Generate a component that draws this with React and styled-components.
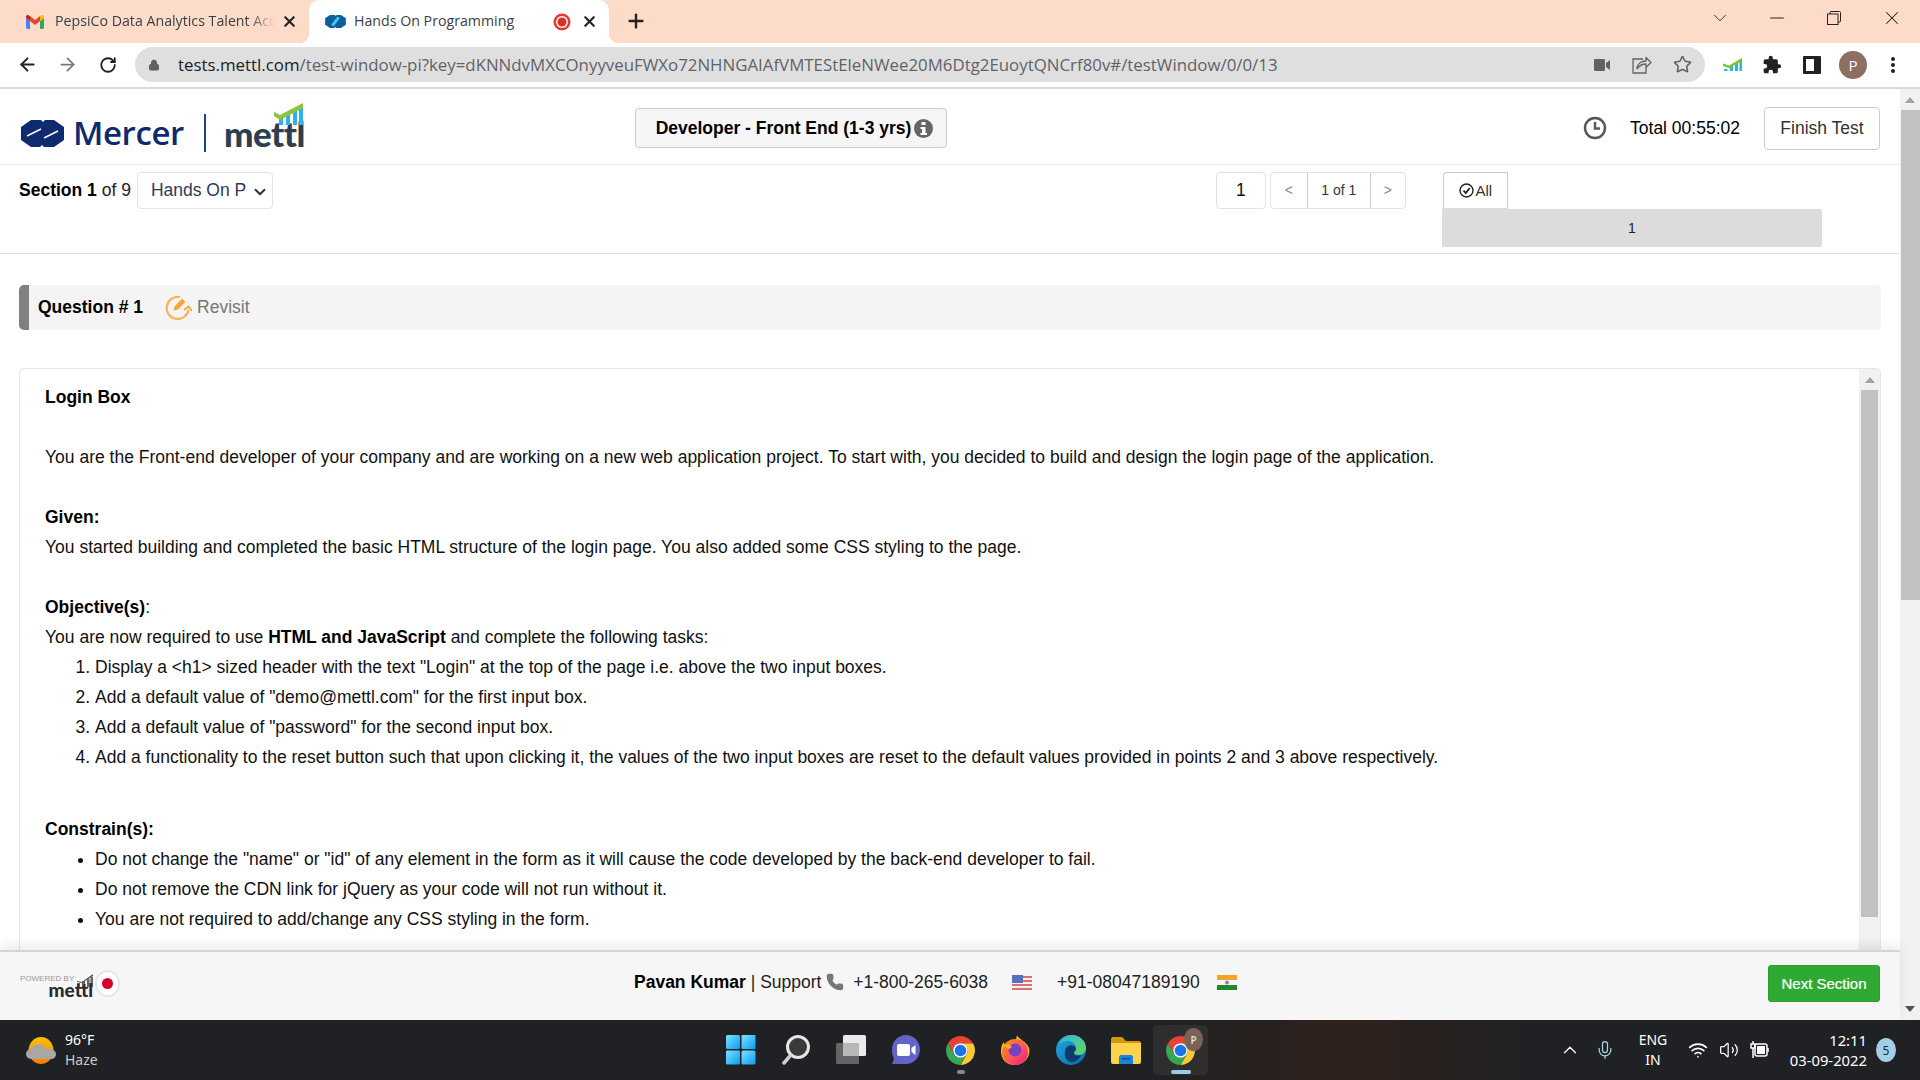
import React from 'react';
import styled, { createGlobalStyle } from 'styled-components';
import { ArrowLeft, ArrowRight, RotateCw, Lock, Star, X, Plus, ChevronDown, Minus, ChevronUp, Mic, Wifi, Volume2, Phone } from 'lucide-react';

const Global = createGlobalStyle`
  html, body { margin: 0; padding: 0; height: 100%; overflow: hidden; background: #fff; }
  * { box-sizing: border-box; }
  body { font-family: "Liberation Sans", Arial, sans-serif; color: #212529; }
`;
const Shell = styled.div`display:flex;flex-direction:column;width:1920px;height:1080px;overflow:hidden;`;

/* browser chrome */
const TabStrip = styled.div`display:flex;align-items:stretch;height:43px;flex:none;background:#fcdcc9;font-family:"Open Sans","Noto Sans",sans-serif;font-size:14.200px;color:#3c4043;`;
const Tab = styled.div`
  position:relative;display:flex;align-items:center;height:43px;flex:none;
  width:${p=>p.$w}px;padding-left:${p=>p.$pad}px;
  background:${p=>p.$active?'#fff':'transparent'};
  border-radius:${p=>p.$active?'10px 10px 0 0':'0'};
  ${p=>p.$active?`
    &::before,&::after{content:"";position:absolute;bottom:0;width:10px;height:10px;}
    &::before{left:-10px;background:radial-gradient(circle at 0 0,transparent 10px,#fff 10.5px);}
    &::after{right:-10px;background:radial-gradient(circle at 100% 0,transparent 10px,#fff 10.5px);}
  `:''}
`;
const TabTitle = styled.span`
  margin-left:${p=>p.$ml}px;width:${p=>p.$w}px;white-space:nowrap;overflow:hidden;flex:none;padding-bottom:2px;
  ${p=>p.$fade?'mask-image:linear-gradient(90deg,#000 88%,transparent);':''}
`;
const TabGap = styled.span`flex:none;width:${p=>p.$w}px;`;
const CloseGlyph = styled(X)`flex:none;width:17px;height:17px;stroke-width:3;color:#222;`;
const NewTab = styled(Plus)`flex:none;width:22px;height:22px;stroke-width:2.6;color:#222;margin:10px 0 0 16px;`;
const WinControls = styled.div`margin-left:auto;display:flex;align-items:center;height:36px;color:#222;`;
const WinCell = styled.span`display:flex;justify-content:center;align-items:center;width:${p=>p.$w}px;`;

const ToolBar = styled.div`display:flex;align-items:center;height:46px;flex:none;background:#fff;border-bottom:2px solid #d8d8d8;padding-bottom:1px;`;
const NavCell = styled.span`flex:none;width:${p=>p.$w}px;margin-left:${p=>p.$ml||0}px;display:flex;justify-content:center;align-items:center;color:${p=>p.$c||'#222'};`;
const Omnibox = styled.div`flex:none;display:flex;align-items:center;width:1570px;height:35px;background:#dfdfdf;border-radius:18px;padding-left:13px;`;
const Url = styled.div`font-family:"Open Sans","Noto Sans",sans-serif;font-size:16.850px;color:#5f6368;margin-left:18px;white-space:nowrap;flex:1;overflow:hidden;`;
const UrlHost = styled.span`color:#202124;`;
const OmniIcon = styled.span`flex:none;display:flex;justify-content:center;width:${p=>p.$w}px;color:#5f6368;`;
const Avatar = styled.span`display:flex;justify-content:center;align-items:center;width:28px;height:28px;border-radius:50%;background:#8d6e63;color:#fff;font-family:"Open Sans",sans-serif;font-size:15px;`;

/* page */
const PageArea = styled.div`flex:1;min-height:0;display:flex;`;
const Main = styled.div`flex:none;width:1900px;display:flex;flex-direction:column;min-height:0;`;
const Header = styled.header`flex:none;height:76px;display:flex;align-items:center;border-bottom:1px solid #eee;padding:3px 20px 0 19px;`;
const LogoBlock = styled.div`flex:0 0 616px;display:flex;align-items:center;height:40px;margin-top:10px;padding-left:2px;color:#0d2b6e;`;
const MercerWord = styled.span`font-family:"Open Sans",sans-serif;font-weight:600;font-size:33px;letter-spacing:-.4px;margin-left:9px;line-height:40px;`;
const LogoRule = styled.span`width:2px;height:38px;background:#1e4488;margin-left:20px;flex:none;`;
const MettlMark = styled.span`position:relative;display:inline-block;margin-left:18px;`;
const MettlWord = styled.span`font-family:Lato,"Open Sans",sans-serif;font-weight:900;font-size:35px;letter-spacing:-.5px;line-height:40px;color:#2f3e4e;display:block;`;
const MettlBars = styled.svg`position:absolute;left:50px;top:-10px;`;
const TestTitle = styled.div`flex:none;display:flex;align-items:center;justify-content:center;gap:3px;width:312px;height:40px;padding-left:7px;background:#f6f6f6;border:1px solid #ccc;border-radius:4px;font-weight:700;font-size:17.500px;color:#000;`;
const HeadRight = styled.div`margin-left:auto;display:flex;align-items:center;`;
const Total = styled.span`font-size:17.500px;color:#000;margin:0 24px 0 23px;`;
const FinishBtn = styled.button`width:116px;height:43px;font:17.500px "Liberation Sans",sans-serif;color:#333;background:#fff;border:1px solid #ccc;border-radius:4px;padding:0;`;

const SectionRow = styled.div`flex:none;height:89px;display:flex;align-items:flex-start;border-bottom:1px solid #e3e3e3;padding:7px 0 0 19px;`;
const SectionLabel = styled.span`font-size:17.500px;line-height:37px;color:#222;margin-right:6px;`;
const Strong = styled.strong`color:#000;font-weight:700;`;
const SelectBox = styled.div`display:flex;align-items:center;width:136px;height:37px;border:1px solid #e2e4ea;border-radius:4px;padding-left:13px;font-size:17.500px;color:#2f3a57;background:#fff;position:relative;`;
const SelectChevron = styled(ChevronDown)`position:absolute;right:3px;top:10px;width:18px;height:18px;stroke-width:2.6;color:#2b3240;`;
const CountBox = styled.div`margin-left:943px;flex:none;display:flex;justify-content:center;align-items:center;width:50px;height:37px;border:1px solid #e2e2e2;border-radius:4px;font-size:17.500px;color:#111;`;
const PageGroup = styled.div`flex:none;display:flex;margin-left:4px;height:37px;border:1px solid #e2e2e2;border-radius:4px;`;
const PageCell = styled.div`display:flex;justify-content:center;align-items:center;width:${p=>p.$w}px;font-size:14px;padding-bottom:1px;color:${p=>p.$dim?'#888':'#333'};${p=>p.$mid?'border-left:1px solid #ccc;border-right:1px solid #ccc;':''}`;
const FilterCol = styled.div`flex:none;margin-left:36px;width:380px;display:flex;flex-direction:column;`;
const AllBtn = styled.div`display:flex;align-items:center;justify-content:center;gap:2px;width:65px;height:37px;margin-left:1px;border:1px solid #ccc;border-bottom-color:#ddd;border-radius:4px 0 0 0;font-size:15px;color:#333;`;
const QuestionCell = styled.div`display:flex;justify-content:center;align-items:center;height:38px;background:#dcdcdc;border-radius:0 3px 3px 0;font-size:14px;color:#222;`;

const QuestionBar = styled.div`flex:none;display:flex;align-items:center;height:45px;margin:31px 19px 0 19px;background:#f4f4f4;border-left:10px solid #808080;border-radius:5px;padding-left:9px;`;
const QTitle = styled.span`font-weight:700;font-size:17.500px;color:#000;margin-right:22px;`;
const RevisitLabel = styled.span`font-size:17.500px;color:#777;margin-left:5px;`;

const Panel = styled.section`flex:1;min-height:0;display:flex;margin:38px 19px 0 19px;border:1px solid #e6e6e6;border-bottom:0;border-radius:5px 5px 0 0;overflow:hidden;`;
const Article = styled.div`flex:1;padding:13px 0 0 25px;font-size:17.500px;line-height:30px;color:#111;`;
const Para = styled.div`margin-top:${p=>p.$mt||0}px;margin-bottom:${p=>p.$mb||0}px;`;
const Heading = styled.strong`font-weight:700;color:#000;`;
const Ol = styled.ol`margin:0;padding-left:50px;`;
const Ul = styled.ul`margin:0;padding-left:50px;`;
const InnerTrack = styled.div`flex:none;width:21px;background:#f1f1f1;display:flex;flex-direction:column;align-items:center;padding-top:8px;`;
const ArrowUp = styled.span`width:0;height:0;border-left:5px solid transparent;border-right:5px solid transparent;border-bottom:6px solid #a3a3a3;`;
const ArrowDown = styled.span`width:0;height:0;border-left:5px solid transparent;border-right:5px solid transparent;border-top:6px solid #505050;`;
const InnerThumb = styled.div`width:17px;height:527px;background:#c1c1c1;margin-top:7px;`;

const Footer = styled.footer`flex:none;position:relative;height:70px;display:flex;align-items:center;background:#f6f6f6;border-top:2px solid #d4d4d4;box-shadow:0 -6px 10px rgba(0,0,0,.07);padding:0 20px 6px 20px;`;
const Powered = styled.div`flex:0 0 614px;display:flex;align-items:center;`;
const PoweredText = styled.div`position:relative;width:73px;height:30px;`;
const PoweredBy = styled.span`position:absolute;left:0;top:6px;font-size:8px;line-height:9px;color:#999;white-space:nowrap;`;
const PoweredWord = styled.span`position:absolute;right:0;top:15px;font-family:Lato,sans-serif;font-weight:900;font-size:19px;line-height:14px;color:#2b2b2b;`;
const PoweredBars = styled.svg`position:absolute;right:0;top:6px;`;
const RedDot = styled.span`display:flex;justify-content:center;align-items:center;width:25px;height:27px;margin-left:2px;border-radius:50%;background:#fff;border:2px solid #e6e6e6;&::after{content:"";width:11px;height:11px;border-radius:50%;background:#d8002a;}`;
const Support = styled.div`display:flex;align-items:center;font-size:17.500px;color:#222;white-space:pre;margin-bottom:2px;`;
const PhoneNum = styled.span`margin:0 ${p=>p.$mr}px 0 ${p=>p.$ml}px;`;
const Flag = styled.svg`flex:none;`;
const NextBtn = styled.button`margin-left:auto;width:112px;height:37px;background:#2eaa33;border:1px solid #28a02d;border-radius:3px;color:#fff;font:400 15px "Liberation Sans",sans-serif;-webkit-text-stroke:.2px #fff;padding:0;`;
const PageScroll = styled.div`flex:1;background:#f1f1f1;display:flex;flex-direction:column;align-items:flex-end;padding-top:8px;min-height:0;`;
const PageArrowWrap = styled.span`align-self:center;display:flex;`;
const PageThumb = styled.div`width:19px;height:490px;background:#c1c1c1;margin-top:7px;`;
const PageArrowDown = styled.span`align-self:center;margin-top:auto;margin-bottom:8px;display:flex;`;

/* taskbar */
const Taskbar = styled.div`flex:none;position:relative;display:flex;align-items:center;height:60px;background:linear-gradient(90deg,#202124 0%,#202124 60%,#2f211b 70%,#202124 80%);color:#fff;font-family:"Noto Sans","Open Sans",sans-serif;`;
const Weather = styled.div`flex:0 0 713px;display:flex;align-items:center;padding-left:26px;`;
const WeatherText = styled.div`margin-left:9px;font-size:14px;line-height:20px;`;
const WeatherSub = styled.div`color:#ccc;`;
const Dock = styled.div`display:flex;align-items:center;`;
const DockCell = styled.div`position:relative;flex:none;display:flex;justify-content:center;align-items:center;width:55px;height:50px;${p=>p.$active?'background:rgba(255,255,255,.06);border-radius:5px;':''}`;
const DockPip = styled.span`position:absolute;bottom:1px;left:50%;transform:translateX(-50%);height:4px;border-radius:2px;width:${p=>p.$active?20:8}px;background:${p=>p.$active?'#9ccbe3':'#888'};`;
const PBadge = styled.span`position:absolute;top:3px;right:5px;width:19px;height:23px;border-radius:50%;background:#7b6156;color:#ddd;font-size:10px;font-weight:600;display:flex;justify-content:center;align-items:center;`;
const Tray = styled.div`margin-left:auto;display:flex;align-items:center;padding-right:53px;`;
const TrayCell = styled.span`flex:none;display:flex;justify-content:center;align-items:center;width:${p=>p.$w}px;margin-left:${p=>p.$ml||0}px;`;
const Lang = styled.div`flex:none;width:40px;margin-left:16px;text-align:center;font-size:14px;line-height:20px;`;
const Clock2 = styled.div`flex:none;margin-left:18px;text-align:right;font-size:14.800px;line-height:20px;width:78px;white-space:nowrap;`;
const Notif = styled.span`position:absolute;right:24px;top:18px;width:20px;height:24px;border-radius:50%;background:#a3cfe6;color:#1c2b33;font-size:12px;display:flex;justify-content:center;align-items:center;`;

const Gmail = () => (
  <svg width="18" height="14" viewBox="0 0 18 14">
    <path d="M0 3v9.6c0 .8.6 1.4 1.3 1.4H4V6z" fill="#4285f4"/>
    <path d="M14 6v8h2.7c.7 0 1.3-.6 1.3-1.4V3z" fill="#34a853"/>
    <path d="M14 1v5l4-3V1.700C18 .3 16.300-.5 15.200.4z" fill="#fbbc04"/>
    <path d="M4 6V1l5 4 5-4v5L9 10z" fill="#ea4335"/>
    <path d="M0 1.700V3l4 3V1L2.800.4C1.700-.5 0 .3 0 1.700z" fill="#c5221f"/>
  </svg>
);
const MercerFav = () => (
  <svg width="21" height="13" viewBox="0 0 43 27">
    <path d="M10 0H20L22 2 24 0H33L43 7V20L33 27H23L21 25 19 27H10L0 20V7Z" fill="#0c5f9e"/>
    <path d="M15 22L28 5" stroke="#4dc3e8" strokeWidth="6"/>
  </svg>
);
const RecDot = () => (
  <svg width="18" height="18" viewBox="0 0 18 18"><circle cx="9" cy="9" r="8.500" fill="#e53935"/><circle cx="9" cy="9" r="6" fill="#fff"/><circle cx="9" cy="9" r="4.500" fill="#d93025"/></svg>
);
const VideoCam = () => (
  <svg width="16" height="12" viewBox="0 0 16 12"><path d="M0 1.200C0 .5.500 0 1.200 0h8.600c.7 0 1.200.5 1.200 1.200v9.600c0 .7-.5 1.200-1.200 1.200H1.200C.5 12 0 11.500 0 10.800z M12 4l4-3v10l-4-3z" fill="#5f6368"/></svg>
);
const ShareIcon = () => (
  <svg width="20" height="18" viewBox="0 0 20 18" fill="none" stroke="#5f6368" strokeWidth="1.300">
    <path d="M11 3H1v14h13v-5"/>
    <path d="M5 13c0-5 4-8 9-8V1.500l5 5-5 5V8c-4 0-7 2-9 5z" strokeLinejoin="round"/>
  </svg>
);
const TinyMettl = () => (
  <svg width="20" height="20" viewBox="0 0 20 20">
    <path d="M1 16v-2h3.500v2zM7 16v-5h3v5zM12 16V8h3v8zM16.500 16V6H19v10z" fill="#29b6d8"/>
    <path d="M0 8.500l6 2L19 3v3L6 13l-6-2z" fill="#7cc423"/>
  </svg>
);
const PuzzleIcon = () => (
  <svg width="20" height="20" viewBox="0 0 24 24"><path fill="#222" d="M20.500 11H19V7a2 2 0 0 0-2-2h-4V3.500a2.500 2.500 0 0 0-5 0V5H4a2 2 0 0 0-2 2v3.800h1.500a2.700 2.700 0 0 1 0 5.400H2V20a2 2 0 0 0 2 2h3.800v-1.500a2.700 2.700 0 0 1 5.400 0V22H17a2 2 0 0 0 2-2v-4h1.500a2.500 2.500 0 0 0 0-5z"/></svg>
);
const SidePanel = () => (
  <svg width="18" height="18" viewBox="0 0 18 18"><rect width="18" height="18" rx="1" fill="#202124"/><rect x="3" y="3" width="8" height="12" fill="#fff"/></svg>
);
const Dots = () => (
  <svg width="6" height="18" viewBox="0 0 6 18"><circle cx="3" cy="3" r="2" fill="#222"/><circle cx="3" cy="9" r="2" fill="#222"/><circle cx="3" cy="15" r="2" fill="#222"/></svg>
);
const RestoreIcon = () => (
  <svg width="14" height="14" viewBox="0 0 14 14" fill="none" stroke="#222" strokeWidth="1"><rect x=".5" y="3" width="10.500" height="10.500"/><path d="M3 3V1.500c0-.6.4-1 1-1h8.500c.6 0 1 .4 1 1V10c0 .6-.4 1-1 1H11"/></svg>
);
const MercerMark = () => (
  <svg width="43" height="27" viewBox="0 0 43 27">
    <path d="M10 0H20L22 2 24 0H33L43 7V20L33 27H23L21 25 19 27H10L0 20V7Z" fill="#0d2b6e"/>
    <path d="M6 16L20 9" stroke="#fff" strokeWidth="1.500"/>
    <path d="M23 18L37 11" stroke="#fff" strokeWidth="1.500"/>
  </svg>
);
const InfoBadge = () => (
  <svg width="19" height="19" viewBox="0 0 19 19"><circle cx="9.500" cy="9.500" r="9.500" fill="#666"/><rect x="7.500" y="3" width="4" height="3" fill="#fff"/><path d="M6.500 8h5v6h1.500v2H6.500v-2H8v-4H6.500z" fill="#fff"/></svg>
);
const ClockIcon = () => (
  <svg width="24" height="24" viewBox="0 0 24 24" fill="none" stroke="#555" strokeWidth="2.400"><circle cx="12" cy="12" r="10"/><path d="M12 6v6.500h5"/></svg>
);
const RevisitIcon = () => (
  <svg width="27" height="25" viewBox="0 0 27 25" fill="none">
    <path d="M15 2.200A11 11 0 1 0 23.500 15" stroke="#f6b55a" strokeWidth="2.200"/>
    <path d="M8.500 15.500l1-4L17 3.500l3.500 3.500L13 14.500z" fill="#f6a63c"/>
    <path d="M19 15l4.500-3.500 3.500 4.500" stroke="#f6a63c" strokeWidth="1.800"/>
  </svg>
);
const AllCheck = () => (
  <svg width="15" height="15" viewBox="0 0 15 15" fill="none" stroke="#222"><circle cx="7.500" cy="7.500" r="6.500" strokeWidth="1.400"/><path d="M4.500 7.500l2.200 2.500 4-5" strokeWidth="1.800"/></svg>
);
const UsFlag = () => (
  <Flag width="20" height="15" viewBox="0 0 20 15">
    <rect width="20" height="15" fill="#f2f2f2"/>
    <path d="M0 1h20v2H0zM0 5h20v2H0zM0 9h20v2H0zM0 13h20v2H0z" fill="#d9706c"/>
    <rect width="11" height="8" fill="#5a6fc0"/>
  </Flag>
);
const InFlag = () => (
  <Flag width="20" height="15" viewBox="0 0 20 15">
    <rect width="20" height="5" fill="#f0a42c"/><rect y="5" width="20" height="5" fill="#f5f5f5"/><rect y="10" width="20" height="5" fill="#1f8a2c"/>
    <circle cx="10" cy="7.500" r="2" fill="#7f88b8"/>
  </Flag>
);
const SunCloud = () => (
  <svg width="30" height="27" viewBox="0 0 30 27">
    <defs><linearGradient id="sun" x1="0" y1="0" x2="0" y2="1"><stop offset="0" stopColor="#ffc107"/><stop offset="1" stopColor="#f57c00"/></linearGradient></defs>
    <ellipse cx="15" cy="13.500" rx="12.500" ry="13.500" fill="url(#sun)"/>
    <path d="M5 22a5 5 0 0 1 0-10 7 7 0 0 1 4-4c3-2 8-1 9 2 1 1 2 1 3 2 5-1 9 2 9 5s-2 5-5 5z" fill="#a9a7a3"/>
  </svg>
);
const WinLogo = () => (
  <svg width="30" height="30" viewBox="0 0 30 30">
    <defs><linearGradient id="w" x1="0" y1="0" x2="1" y2="1"><stop offset="0" stopColor="#7be3ff"/><stop offset="1" stopColor="#0a9bf5"/></linearGradient></defs>
    <rect width="14" height="14" rx="1.500" fill="url(#w)"/><rect x="15.500" width="14" height="14" rx="1" fill="url(#w)"/>
    <rect y="15.500" width="14" height="14" rx="1" fill="url(#w)"/><rect x="15.500" y="15.500" width="14" height="14" rx="1.500" fill="url(#w)"/>
  </svg>
);
const SearchLogo = () => (
  <svg width="28" height="30" viewBox="0 0 28 30" fill="none">
    <circle cx="16" cy="12" r="10.500" fill="#3a3a3a" stroke="#e6e6e6" strokeWidth="3"/>
    <path d="M8 21l-6 7" stroke="#cfcfcf" strokeWidth="3.500" strokeLinecap="round"/>
  </svg>
);
const TaskView = () => (
  <svg width="30" height="30" viewBox="0 0 30 30">
    <rect x="7" y="0" width="23" height="21" rx="1.500" fill="#eaeaea"/>
    <rect y="8" width="23" height="21" rx="1.500" fill="#6b6b6b" opacity=".92"/>
    <rect x="7" y="8" width="16" height="13" fill="#b8b8b8"/>
  </svg>
);
const MeetIcon = () => (
  <svg width="30" height="30" viewBox="0 0 30 30">
    <path d="M15 0c8 0 14 6.700 14 14.500S23 29 15 29H1l2-5A15 15 0 0 1 1 14.500C1 6.700 7 0 15 0z" fill="#6264c7"/>
    <rect x="6" y="9" width="13" height="12" rx="2" fill="#fff"/><path d="M20.500 13l4-3v10l-4-3z" fill="#fff"/>
  </svg>
);
const ChromeIcon = () => (
  <svg width="29" height="29" viewBox="4 4 40 40">
    <path d="M41.300 14H24a10 10 0 0 1 8.660 15L24 44a20 20 0 0 0 17.300-30z" fill="#fcc934"/>
    <path d="M24 44l8.660-15A10 10 0 0 1 15.340 29L6.680 14A20 20 0 0 0 24 44z" fill="#34a853"/>
    <path d="M6.680 14l8.660 15A10 10 0 0 1 24 14h17.300A20 20 0 0 0 6.680 14z" fill="#ea4335"/>
    <circle cx="24" cy="24" r="10" fill="#fff"/><circle cx="24" cy="24" r="8" fill="#1a73e8"/>
  </svg>
);
const FirefoxIcon = () => (
  <svg width="29" height="30" viewBox="0 0 29 30">
    <defs><linearGradient id="ff" x1="0" y1="0" x2="1" y2="1"><stop offset="0" stopColor="#ff9500"/><stop offset=".6" stopColor="#ff4f5e"/><stop offset="1" stopColor="#e31587"/></linearGradient></defs>
    <path d="M16 0c1 4 9 6 12 13 2 9-5 17-14 17S0 24 0 16c0-4 1-7 3-9 0 2 1 3 2 3 1-3 3-4 6-5 2 2 4 2 5-5z" fill="#ffc21a"/>
    <circle cx="14" cy="17" r="13" fill="url(#ff)"/>
    <circle cx="14" cy="15" r="6.500" fill="#7b3fc6"/>
    <path d="M2 11c3-3 7-2 9 1l-3 2c-2-1-4-2-6-3z" fill="#ffb01f"/>
  </svg>
);
const EdgeIcon = () => (
  <svg width="30" height="30" viewBox="0 0 30 30">
    <defs>
      <linearGradient id="e1" x1="0" y1="0" x2="1" y2="1"><stop offset="0" stopColor="#1fa7e0"/><stop offset="1" stopColor="#0b6ab0"/></linearGradient>
      <linearGradient id="e2" x1="0" y1="0" x2="1" y2="1"><stop offset="0" stopColor="#2cb5e0"/><stop offset="1" stopColor="#6bd65a"/></linearGradient>
    </defs>
    <circle cx="15" cy="15" r="15" fill="url(#e1)"/>
    <path d="M2 10C5 3 11 0 16 0c8 0 14 6 14 13 0 4-3 7-7 7-3 0-5-1-5-3 1-1 2-2 2-4 0-4-4-7-8-7-5 0-9 2-10 4z" fill="url(#e2)"/>
    <path d="M9 17c0-5 5-8 9-6 3 2 2 5 0 6-1 3 3 5 7 3-2 5-7 8-11 7-4-2-6-6-5-10z" fill="#0e3a6e"/>
  </svg>
);
const FolderIcon = () => (
  <svg width="30" height="27" viewBox="0 0 30 27">
    <path d="M0 2c0-1 1-2 2-2h9l4 4h13c1 0 2 1 2 2v4H0z" fill="#d29b0b"/>
    <path d="M0 6h30v19c0 1-1 2-2 2H2c-1 0-2-1-2-2z" fill="#fcd34a"/>
    <path d="M8 27v-7c0-1 1-2 2-2h10c1 0 2 1 2 2v7z" fill="#1485d8"/>
    <rect x="11" y="21" width="8" height="1.500" fill="#0a4f8c"/>
  </svg>
);
const PowerBatt = () => (
  <svg width="20" height="18" viewBox="0 0 20 18" fill="none" stroke="#fff">
    <rect x="5" y="3" width="12" height="12" rx="2" strokeWidth="1.500"/><rect x="7" y="5" width="8" height="8" fill="#fff" stroke="none"/>
    <path d="M18 7v4" strokeWidth="1.500"/><path d="M3 0v3M1 3h4v4H1zM3 7v10" strokeWidth="1.500"/>
  </svg>
);

export default function App() {
  return (
    <Shell>
      <Global />
      <TabStrip>
        <Tab $w={309} $pad={26}>
          <Gmail />
          <TabTitle $ml={11} $w={220} $fade>PepsiCo Data Analytics Talent Acc</TabTitle>
          <TabGap $w={6} />
          <CloseGlyph />
        </Tab>
        <Tab $w={300} $pad={16} $active>
          <MercerFav />
          <TabTitle $ml={8} $w={199}>Hands On Programming</TabTitle>
          <RecDot />
          <TabGap $w={10} />
          <CloseGlyph />
        </Tab>
        <NewTab />
        <WinControls>
          <WinCell $w={56}><ChevronDown size={22} strokeWidth={1} /></WinCell>
          <WinCell $w={57}><Minus size={22} strokeWidth={1.100} /></WinCell>
          <WinCell $w={58}><RestoreIcon /></WinCell>
          <WinCell $w={57}><X size={22} strokeWidth={1.100} /></WinCell>
        </WinControls>
      </TabStrip>
      <ToolBar>
        <NavCell $w={54}><ArrowLeft size={21} strokeWidth={2.200} /></NavCell>
        <NavCell $w={27} $c="#777"><ArrowRight size={21} strokeWidth={2} /></NavCell>
        <NavCell $w={54}><RotateCw size={18} strokeWidth={2.400} /></NavCell>
        <Omnibox>
          <OmniIcon $w={12}><Lock size={14} fill="#5f6368" strokeWidth={2} /></OmniIcon>
          <Url><UrlHost>tests.mettl.com</UrlHost>/test-window-pi?key=dKNNdvMXCOnyyveuFWXo72NHNGAIAfVMTEStEleNWee20M6Dtg2EuoytQNCrf80v#/testWindow/0/0/13</Url>
          <OmniIcon $w={40}><VideoCam /></OmniIcon>
          <OmniIcon $w={40}><ShareIcon /></OmniIcon>
          <OmniIcon $w={40}><Star size={19} strokeWidth={2} /></OmniIcon>
          <TabGap $w={3} />
        </Omnibox>
        <NavCell $w={38} $ml={9}><TinyMettl /></NavCell>
        <NavCell $w={40}><PuzzleIcon /></NavCell>
        <NavCell $w={40}><SidePanel /></NavCell>
        <NavCell $w={42}><Avatar>P</Avatar></NavCell>
        <NavCell $w={38}><Dots /></NavCell>
      </ToolBar>
      <PageArea>
        <Main>
          <Header>
            <LogoBlock>
              <MercerMark />
              <MercerWord>Mercer</MercerWord>
              <LogoRule />
              <MettlMark>
                <MettlWord>mettl</MettlWord>
                <MettlBars width="30" height="24" viewBox="0 0 30 24">
                  <path d="M5 22v-8h4v8zM12 22V11h4v11zM19 22V8h4v14zM25 22V5h4v17z" fill="#2db4e8" />
                  <path d="M0 9l6 3L29 0v5L6 17 0 13z" fill="#8bc53f" />
                </MettlBars>
              </MettlMark>
            </LogoBlock>
            <TestTitle>Developer - Front End (1-3 yrs)<InfoBadge /></TestTitle>
            <HeadRight>
              <ClockIcon />
              <Total>Total 00:55:02</Total>
              <FinishBtn>Finish Test</FinishBtn>
            </HeadRight>
          </Header>
          <SectionRow>
            <SectionLabel><Strong>Section 1</Strong> of 9</SectionLabel>
            <SelectBox>Hands On P<SelectChevron /></SelectBox>
            <CountBox>1</CountBox>
            <PageGroup>
              <PageCell $w={36} $dim>&lt;</PageCell>
              <PageCell $w={64} $mid>1 of 1</PageCell>
              <PageCell $w={34} $dim>&gt;</PageCell>
            </PageGroup>
            <FilterCol>
              <AllBtn><AllCheck />All</AllBtn>
              <QuestionCell>1</QuestionCell>
            </FilterCol>
          </SectionRow>
          <QuestionBar>
            <QTitle>Question # 1</QTitle>
            <RevisitIcon />
            <RevisitLabel>Revisit</RevisitLabel>
          </QuestionBar>
          <Panel>
            <Article>
              <Para $mb={30}><Heading>Login Box</Heading></Para>
              <Para $mb={30}>You are the Front-end developer of your company and are working on a new web application project. To start with, you decided to build and design the login page of the application.</Para>
              <Para><Heading>Given:</Heading></Para>
              <Para $mb={30}>You started building and completed the basic HTML structure of the login page. You also added some CSS styling to the page.</Para>
              <Para><Heading>Objective(s)</Heading>:</Para>
              <Para>You are now required to use <Heading>HTML and JavaScript</Heading> and complete the following tasks:</Para>
              <Ol>
                <li>Display a &lt;h1&gt; sized header with the text "Login" at the top of the page i.e. above the two input boxes.</li>
                <li>Add a default value of "demo@mettl.com" for the first input box.</li>
                <li>Add a default value of "password" for the second input box.</li>
                <li>Add a functionality to the reset button such that upon clicking it, the values of the two input boxes are reset to the default values provided in points 2 and 3 above respectively.</li>
              </Ol>
              <Para $mt={42}><Heading>Constrain(s):</Heading></Para>
              <Ul>
                <li>Do not change the "name" or "id" of any element in the form as it will cause the code developed by the back-end developer to fail.</li>
                <li>Do not remove the CDN link for jQuery as your code will not run without it.</li>
                <li>You are not required to add/change any CSS styling in the form.</li>
              </Ul>
            </Article>
            <InnerTrack><ArrowUp /><InnerThumb /></InnerTrack>
          </Panel>
          <Footer>
            <Powered>
              <PoweredText>
                <PoweredBy>POWERED BY</PoweredBy>
                <PoweredBars width="16" height="13" viewBox="0 0 16 13"><path d="M0 13V9h3v4zM5 13V7h3v6zM10 13V5h2.500v8zM13.500 13V3H16v10z" fill="#666" /><path d="M0 7l5 1L16 0v2L5 9 0 8z" fill="#555" /></PoweredBars>
                <PoweredWord>mettl</PoweredWord>
              </PoweredText>
              <RedDot />
            </Powered>
            <Support>
              <Strong>Pavan Kumar</Strong> | Support <Phone size={18} fill="#777" stroke="#777" />
              <PhoneNum $ml={9} $mr={24}>+1-800-265-6038</PhoneNum>
              <UsFlag />
              <PhoneNum $ml={25} $mr={17}>+91-08047189190</PhoneNum>
              <InFlag />
            </Support>
            <NextBtn>Next Section</NextBtn>
          </Footer>
        </Main>
        <PageScroll>
          <PageArrowWrap><ArrowUp /></PageArrowWrap>
          <PageThumb />
          <PageArrowDown><ArrowDown /></PageArrowDown>
        </PageScroll>
      </PageArea>
      <Taskbar>
        <Weather>
          <SunCloud />
          <WeatherText>96°F<WeatherSub>Haze</WeatherSub></WeatherText>
        </Weather>
        <Dock>
          <DockCell><WinLogo /></DockCell>
          <DockCell><SearchLogo /></DockCell>
          <DockCell><TaskView /></DockCell>
          <DockCell><MeetIcon /></DockCell>
          <DockCell><ChromeIcon /><DockPip /></DockCell>
          <DockCell><FirefoxIcon /></DockCell>
          <DockCell><EdgeIcon /></DockCell>
          <DockCell><FolderIcon /></DockCell>
          <DockCell $active><ChromeIcon /><PBadge>P</PBadge><DockPip $active /></DockCell>
        </Dock>
        <Tray>
          <TrayCell $w={22}><ChevronUp size={22} strokeWidth={1.300} /></TrayCell>
          <TrayCell $w={24} $ml={12}><Mic size={20} strokeWidth={1.500} color="#a8d4e8" /></TrayCell>
          <Lang>ENG<br />IN</Lang>
          <TrayCell $w={22} $ml={14}><Wifi size={20} strokeWidth={2} /></TrayCell>
          <TrayCell $w={24} $ml={8}><Volume2 size={20} strokeWidth={1.500} /></TrayCell>
          <TrayCell $w={22} $ml={8}><PowerBatt /></TrayCell>
          <Clock2>12:11<br />03-09-2022</Clock2>
        </Tray>
        <Notif>5</Notif>
      </Taskbar>
    </Shell>
  );
}
